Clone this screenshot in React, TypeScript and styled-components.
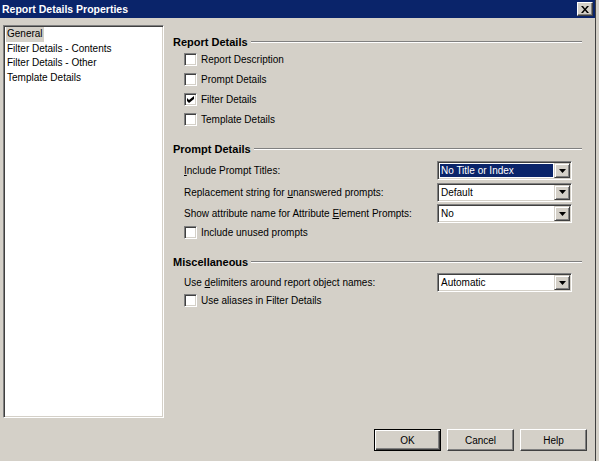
import React from 'react';
import styled, { createGlobalStyle } from 'styled-components';

const GlobalStyle = createGlobalStyle`
  html, body {
    margin: 0;
    padding: 0;
    background: #d4d0c8;
  }
  body {
    font-family: 'Liberation Sans', Arial, sans-serif;
    font-size: 10px;
    color: #000;
  }
`;

const Window = styled.div`
  width: 596px;
  height: 461px;
  background: #d4d0c8;
  border-right: 1px solid #404040;
  display: flex;
  flex-direction: column;
  box-sizing: border-box;
`;

const TitleBar = styled.div`
  height: 18px;
  background: #0a246a;
  color: #fff;
  font-size: 10.5px;
  font-weight: bold;
  display: flex;
  align-items: center;
  justify-content: space-between;
  padding: 0 2px 0 2px;
  flex-shrink: 0;
`;

const CloseButton = styled.div`
  width: 16px;
  height: 14px;
  box-sizing: border-box;
  background: #d4d0c8;
  border: 1px solid;
  border-color: #fff #404040 #404040 #fff;
  box-shadow: inset -1px -1px #808080;
  display: flex;
  align-items: center;
  justify-content: center;
`;

const Main = styled.div`
  display: flex;
  padding: 7px 13px 0 3px;
`;

const sunken = `
  border: 1px solid;
  border-color: #808080 #fff #fff #808080;
  box-shadow: inset 1px 1px #404040, inset -1px -1px #d4d0c8;
`;

const ListBox = styled.div`
  width: 161px;
  height: 393px;
  box-sizing: border-box;
  background: #fff;
  ${sunken};
  padding: 1px 2px;
`;

const ListItem = styled.div<{ $selected?: boolean }>`
  height: 14.5px;
  line-height: 14px;
  padding: 0 1px;
  display: table;
  background: ${(p) => (p.$selected ? '#d4d0c8' : 'transparent')};
`;

const Content = styled.div`
  flex: 1;
  padding-left: 9px;
`;

const Heading = styled.div<{ $top: number }>`
  margin-top: ${(p) => p.$top}px;
  height: 14px;
  line-height: 14px;
  font-size: 11px;
  font-weight: bold;
  display: flex;
  align-items: center;
  gap: 3px;

  &::after {
    content: '';
    flex: 1;
    height: 0;
    border-top: 1px solid #808080;
    border-bottom: 1px solid #fff;
  }
`;

const CheckRow = styled.label<{ $height: number }>`
  height: ${(p) => p.$height}px;
  display: flex;
  align-items: center;
  gap: 4px;
  padding-left: 11px;
`;

const Box = styled.span`
  width: 13px;
  height: 13px;
  box-sizing: border-box;
  background: #fff;
  ${sunken};
  display: flex;
  align-items: center;
  justify-content: center;
`;

const FieldRow = styled.div<{ $top?: number }>`
  height: 21.5px;
  margin-top: ${(p) => p.$top ?? 0}px;
  display: flex;
  align-items: center;
  padding-left: 11px;
`;

const FieldLabel = styled.span`
  width: 253px;
`;

const Combo = styled.div`
  width: 135px;
  height: 19px;
  box-sizing: border-box;
  background: #fff;
  ${sunken};
  display: flex;
  align-items: stretch;
  padding: 2px;
`;

const ComboValue = styled.span<{ $active?: boolean }>`
  flex: 1;
  line-height: 13px;
  padding-left: 1px;
  margin-right: 1px;
  background: ${(p) => (p.$active ? '#0a246a' : 'transparent')};
  color: ${(p) => (p.$active ? '#fff' : '#000')};
`;

const ComboButton = styled.span`
  width: 16px;
  box-sizing: border-box;
  margin: -1px -1px -1px 0;
  background: #d4d0c8;
  border: 1px solid;
  border-color: #d4d0c8 #404040 #404040 #d4d0c8;
  box-shadow: inset 1px 1px #fff, inset -1px -1px #808080;
  display: flex;
  align-items: center;
  justify-content: center;
`;

const Footer = styled.div`
  display: flex;
  justify-content: flex-end;
  gap: 6px;
  padding: 11px 8px 0 0;
`;

const Button = styled.button<{ $default?: boolean }>`
  width: 67px;
  height: 22px;
  box-sizing: border-box;
  font: inherit;
  color: #000;
  background: #d4d0c8;
  padding: 0;
  border: 1px solid;
  border-color: ${(p) => (p.$default ? '#000' : '#fff #404040 #404040 #fff')};
  box-shadow: ${(p) =>
    p.$default
      ? 'inset 1px 1px #fff, inset -1px -1px #404040, inset -2px -2px #808080'
      : 'inset -1px -1px #808080'};
`;

const Arrow = () => (
  <svg width="7" height="4" viewBox="0 0 7 4">
    <path d="M0 0h7L3.5 4z" fill="#000" />
  </svg>
);

const Tick = () => (
  <svg width="7" height="7" viewBox="0 0 7 7">
    <path d="M0 2l2 2 5-4v3L2 7 0 5z" fill="#000" />
  </svg>
);

const Check = ({ label, checked, height }: { label: string; checked?: boolean; height: number }) => (
  <CheckRow $height={height}>
    <Box>{checked && <Tick />}</Box>
    <span>{label}</span>
  </CheckRow>
);

const Select = ({ value, active }: { value: string; active?: boolean }) => (
  <Combo>
    <ComboValue $active={active}>{value}</ComboValue>
    <ComboButton>
      <Arrow />
    </ComboButton>
  </Combo>
);

const pages = ['General', 'Filter Details - Contents', 'Filter Details - Other', 'Template Details'];

export default function App() {
  return (
    <>
      <GlobalStyle />
      <Window>
        <TitleBar>
          <span>Report Details Properties</span>
          <CloseButton>
            <svg width="8" height="7" viewBox="0 0 8 7">
              <path d="M0 0h2l2 2.5L6 0h2L5 3.5 8 7H6L4 4.5 2 7H0l3-3.5z" fill="#000" />
            </svg>
          </CloseButton>
        </TitleBar>
        <Main>
          <ListBox>
            {pages.map((p, i) => (
              <ListItem key={p} $selected={i === 0}>
                {p}
              </ListItem>
            ))}
          </ListBox>
          <Content>
            <Heading $top={10}>Report Details</Heading>
            <Check label="Report Description" height={20} />
            <Check label="Prompt Details" height={20} />
            <Check label="Filter Details" height={20} checked />
            <Check label="Template Details" height={20} />

            <Heading $top={13}>Prompt Details</Heading>
            <FieldRow $top={4}>
              <FieldLabel>
                <u>I</u>nclude Prompt Titles:
              </FieldLabel>
              <Select value="No Title or Index" active />
            </FieldRow>
            <FieldRow>
              <FieldLabel>
                Replacement string for <u>u</u>nanswered prompts:
              </FieldLabel>
              <Select value="Default" />
            </FieldRow>
            <FieldRow>
              <FieldLabel>
                Show attribute name for Attribute <u>E</u>lement Prompts:
              </FieldLabel>
              <Select value="No" />
            </FieldRow>
            <Check label="Include unused prompts" height={16} />

            <Heading $top={14.5}>Miscellaneous</Heading>
            <FieldRow $top={3}>
              <FieldLabel>
                Use <u>d</u>elimiters around report object names:
              </FieldLabel>
              <Select value="Automatic" />
            </FieldRow>
            <Check label="Use aliases in Filter Details" height={14} />
          </Content>
        </Main>
        <Footer>
          <Button $default>OK</Button>
          <Button>Cancel</Button>
          <Button>Help</Button>
        </Footer>
      </Window>
    </>
  );
}
